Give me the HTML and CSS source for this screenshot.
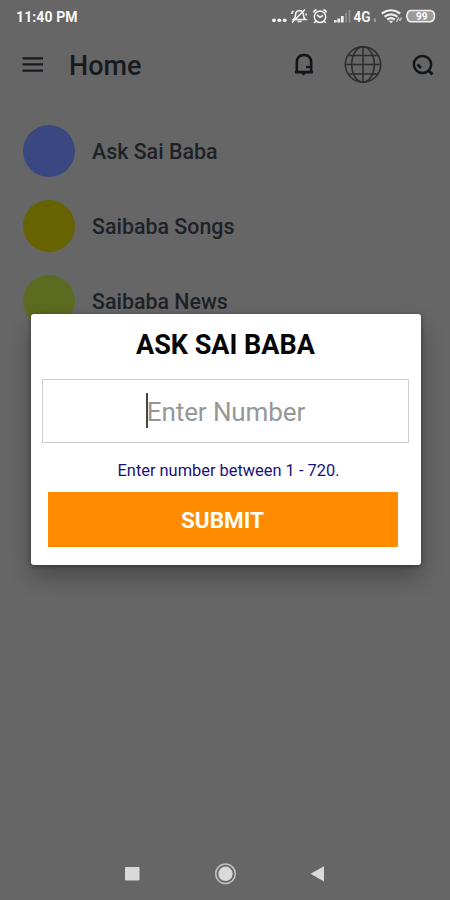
FILE: index.html
```html
<!DOCTYPE html>
<html lang="en">
<head>
<meta charset="utf-8">
<title>Home</title>
<link rel="stylesheet" href="styles.css">
</head>
<body>
<div class="screen">
  <header class="status">
    <span class="clock">11:40 PM</span>
    <svg class="status-icons" width="174" height="34" viewBox="270 0 174 34" fill="none" stroke="#f0f0f0" stroke-width="1.600">
      <g fill="#f4f4f4" stroke="none"><circle cx="274" cy="20.3" r="1.9"/><circle cx="279.300" cy="20.300" r="1.900"/><circle cx="284.700" cy="20.300" r="1.900"/></g>
      <path d="M293.500 19.500q2-1.500 2-4.500 0-4 4-4.500 4 .5 4 4.500 0 3 2 4.500zM297.500 21.500h4M292 22.500l13-13M291.800 14q.2-2 1.500-3.300M306 13.500l.3 2"/>
      <circle cx="320" cy="16.800" r="5.700"/><path d="M313.600 12.500q.5-2 3-2.800M326.400 12.500q-.5-2-3-2.800" stroke-width="1.900"/><path d="M315.800 21.300l-1.700 1.700M324.200 21.300l1.700 1.700M317 15l3 2.200 3-1.700"/>
      <g stroke-width="2.700"><path d="M335.300 22.500v-2.500M338.800 22.500v-4M342.300 22.500v-6.500"/><path d="M346 22.500v-9.500M349.500 22.500v-12.500" stroke="#8d8d8d" stroke-width="1.800"/></g>
      <text class="network" x="353.600" y="21.800" textLength="17" lengthAdjust="spacingAndGlyphs">4G</text>
      <path d="M375 18.500v3.500" stroke="#aaa"/>
      <path d="M381.800 13.500q9.200-6.500 18.400 0M384.500 16.600q6.500-4.600 13 0M387.200 19.500q3.800-2.600 7.600 0" stroke-width="2.200"/>
      <path d="M388.600 20.800l2.400 2.400 2.400-2.400z" fill="#f0f0f0" stroke="none"/>
      <path d="M396.300 21.800l2.700-4.300M399.500 21l2-3.300" stroke="#bbb"/>
      <path d="M410.500 10.500h20q4 .7 4 5.500t-4 5.700h-20q-2.800-.4-3.200-3.500-1.300-2.200 0-4.200.4-3.100 3.200-3.500z" fill="#9b9b9b"/>
      <text class="battery" x="416" y="19.700" textLength="11.500" lengthAdjust="spacingAndGlyphs">99</text>
    </svg>
  </header>
  <nav class="toolbar">
    <svg class="menu" width="22" height="18" viewBox="0 0 22 18" stroke="#171b20" stroke-width="2.200"><path d="M.5 2.300h20.500M.5 8.300h20.500M.5 14.600h20.500"/></svg>
    <h1 class="page-title">Home</h1>
    <svg width="20" height="24" viewBox="294 53 20 24" fill="none" stroke="#121519" stroke-width="2.600">
      <path d="M296.800 72V62.500Q297 55 304 55T311.200 62.500V72z"/><path d="M295 72.200h17.800" stroke-width="2.400"/><path d="M301 73.300h5l-2.500 2.200z" fill="#121519" stroke="none"/><path d="M306 67h5" stroke-width="2.400"/>
    </svg>
    <svg class="globe" width="38" height="38" viewBox="0 0 38 38" fill="none" stroke="#2c2e30" stroke-width="1.600">
      <circle cx="19" cy="18.500" r="17.700"/><ellipse cx="19" cy="18.500" rx="11.300" ry="17.700"/><path d="M19 .8v35.400M1.200 18.500h35.600M4.500 9.500h29M4.500 28h29"/>
    </svg>
    <svg class="search" width="23" height="23" viewBox="412 53.500 23 23" fill="none" stroke="#121519" stroke-width="2.500">
      <circle cx="422.500" cy="64" r="8.600"/><path d="M428 69.500l4.500 4.300" stroke-width="3"/><path d="M417.500 64l3.500 3.500" stroke-width="2.600"/>
    </svg>
  </nav>
  <ul class="list">
    <li><i class="dot blue"></i><span>Ask Sai Baba</span></li>
    <li><i class="dot olive"></i><span>Saibaba Songs</span></li>
    <li><i class="dot lime"></i><span>Saibaba News</span></li>
  </ul>
  <footer class="navbar">
    <svg width="450" height="36" viewBox="0 0 450 36" fill="#d9d9d9">
      <rect x="125" y="11" width="14.500" height="13.500" rx="1"/>
      <circle cx="225.500" cy="17.800" r="9.800" fill="none" stroke="#c4c4c4" stroke-width="1.500"/><circle cx="225.500" cy="17.800" r="7.200"/>
      <path d="M310.500 17.700L324 10.300v15.200z"/>
    </svg>
  </footer>
</div>
<div class="overlay">
  <section class="dialog">
    <h2 class="dialog-title">ASK SAI BABA</h2>
    <div class="field"><span class="caret"></span><span class="placeholder">Enter Number</span></div>
    <p class="hint">Enter number between 1 - 720.</p>
    <button class="submit">SUBMIT</button>
  </section>
</div>
</body>
</html>
```

FILE: styles.css
```css
* { box-sizing: border-box; margin: 0; padding: 0; }
body { width: 450px; height: 900px; overflow: hidden; font-family: Roboto, sans-serif; }
svg { display: block; }
.screen { width: 450px; height: 900px; background: #666; display: flex; flex-direction: column; }
.status { height: 34px; display: flex; justify-content: space-between; padding: 0 6px 0 16px; }
.clock { font-size: 14px; letter-spacing: .1px; font-weight: 700; line-height: 34px; color: #f6f6f6; white-space: nowrap; }
.network { font: 700 14px Roboto, sans-serif; fill: #f4f4f4; stroke: none; }
.battery { font: 700 10px Roboto, sans-serif; fill: #fff; stroke: none; }
.toolbar { height: 62px; display: flex; align-items: center; padding: 0 15px 0 22px; }
.menu { margin-right: 25px; }
.page-title { width: 225px; font-size: 27px; font-weight: 500; line-height: 32px; padding-top: 2px; color: #171b20; }
.globe { margin-left: 30px; }
.search { margin-left: auto; }
.list { list-style: none; flex: 1; padding: 17px 0 0 23px; }
.list li { height: 75px; display: flex; align-items: center; font-size: 21.400px; font-weight: 500; color: #1d2228; }
.list span { padding-top: 1px; }
.dot { width: 52px; height: 52px; border-radius: 50%; margin-right: 17px; }
.blue { background: #3b4780; }
.olive { background: #666300; }
.lime { background: #5d6b20; }
.navbar { height: 44px; }
.overlay { position: absolute; inset: 0; width: 450px; height: 900px; padding: 314px 29.500px 0 30.500px; }
.dialog { height: 250.500px; background: #fff; border-radius: 3px; box-shadow: 0 12px 22px rgba(0,0,0,.28), 0 1px 4px rgba(0,0,0,.4); display: flex; flex-direction: column; align-items: center; }
.dialog-title { height: 65px; line-height: 62px; font-size: 27px; font-weight: 700; color: #050505; white-space: nowrap; }
.field { width: 367px; height: 64px; border: 1px solid #cecece; display: flex; align-items: center; justify-content: center; }
.caret { width: 2px; height: 35px; background: #444; margin: 0 -1px 1px 0; }
.placeholder { font-size: 26px; letter-spacing: -.1px; line-height: 60px; color: #979797; margin-top: 2px; }
.hint { height: 49px; line-height: 55px; font-size: 16.400px; color: #17127a; white-space: nowrap; padding-left: 6px; }
.submit { width: 350px; height: 55px; border: 0; background: #ff8b00; color: #fff; font: 700 22.500px/57px Roboto, sans-serif; margin-right: 6px; }
```
